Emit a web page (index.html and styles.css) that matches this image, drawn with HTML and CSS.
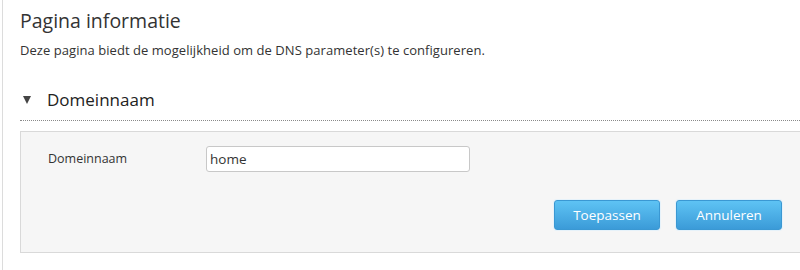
FILE: index.html
```html
<!DOCTYPE html>
<html lang="nl">
<head>
<meta charset="utf-8">
<title>Pagina informatie</title>
<link rel="stylesheet" href="styles.css">
</head>
<body>
<div class="page">
  <h1 class="title">Pagina informatie</h1>
  <p class="intro">Deze pagina biedt de mogelijkheid om de DNS parameter(s) te configureren.</p>
  <div class="section-head">
    <span class="caret"></span>
    <h2 class="section-title">Domeinnaam</h2>
  </div>
  <div class="panel">
    <div class="row">
      <label class="label" for="domain">Domeinnaam</label>
      <input class="field" id="domain" type="text" value="home">
    </div>
    <div class="actions">
      <button class="btn" type="button">Toepassen</button>
      <button class="btn" type="button">Annuleren</button>
    </div>
  </div>
</div>
</body>
</html>
```

FILE: styles.css
```css
html, body {
  margin: 0;
  padding: 0;
  background: #ffffff;
  overflow: hidden;
}
body {
  width: 800px;
  height: 270px;
  font-family: "Open Sans", "Noto Sans", "Liberation Sans", sans-serif;
  color: #333333;
}
.page {
  margin-left: 2px;
  border-left: 1px solid #dcdcdc;
  padding-left: 17px;
  padding-top: 8px;
  width: 820px;
  height: 270px;
  box-sizing: border-box;
}
.title {
  margin: 0;
  font-size: 19.5px;
  font-weight: normal;
  line-height: 26px;
  color: #333333;
}
.intro {
  margin: 7px 0 0 0;
  font-size: 13px;
  letter-spacing: 0.05px;
  line-height: 18px;
  color: #333333;
}
.section-head {
  display: flex;
  align-items: center;
  margin-top: 29px;
  height: 24px;
  padding-bottom: 8px;
  border-bottom: 1px dotted #8a8a8a;
}
.caret {
  width: 0;
  height: 0;
  margin-left: 3px;
  border-left: 4.5px solid transparent;
  border-right: 4.5px solid transparent;
  border-top: 8px solid #444444;
}
.section-title {
  margin: 0 0 0 16px;
  font-size: 17px;
  font-weight: normal;
  line-height: 24px;
  color: #222222;
}
.panel {
  margin-top: 10px;
  background: #f6f6f6;
  border: 1px solid #d9d9d9;
  height: 122px;
  box-sizing: border-box;
  padding: 14px 39px 0 27px;
}
.row {
  display: flex;
  align-items: center;
}
.label {
  width: 158px;
  font-size: 12.5px;
  color: #333333;
  margin-top: -2px;
}
.field {
  width: 264px;
  height: 26px;
  box-sizing: border-box;
  border: 1px solid #c8c8c8;
  border-radius: 3px;
  background: #ffffff;
  padding: 0 3px;
  font-family: inherit;
  font-size: 13.5px;
  color: #333333;
}
.actions {
  display: flex;
  justify-content: flex-end;
  gap: 16px;
  margin-top: 28px;
}
.btn {
  width: 106px;
  height: 30px;
  box-sizing: border-box;
  border: 1px solid #3a98d3;
  border-radius: 3px;
  background: linear-gradient(#5ec3f4, #3b9bd8);
  color: #ffffff;
  font-family: inherit;
  font-size: 13.5px;
  padding: 0;
  box-shadow: 0 0 0 1px #e6f2fa;
}
```
